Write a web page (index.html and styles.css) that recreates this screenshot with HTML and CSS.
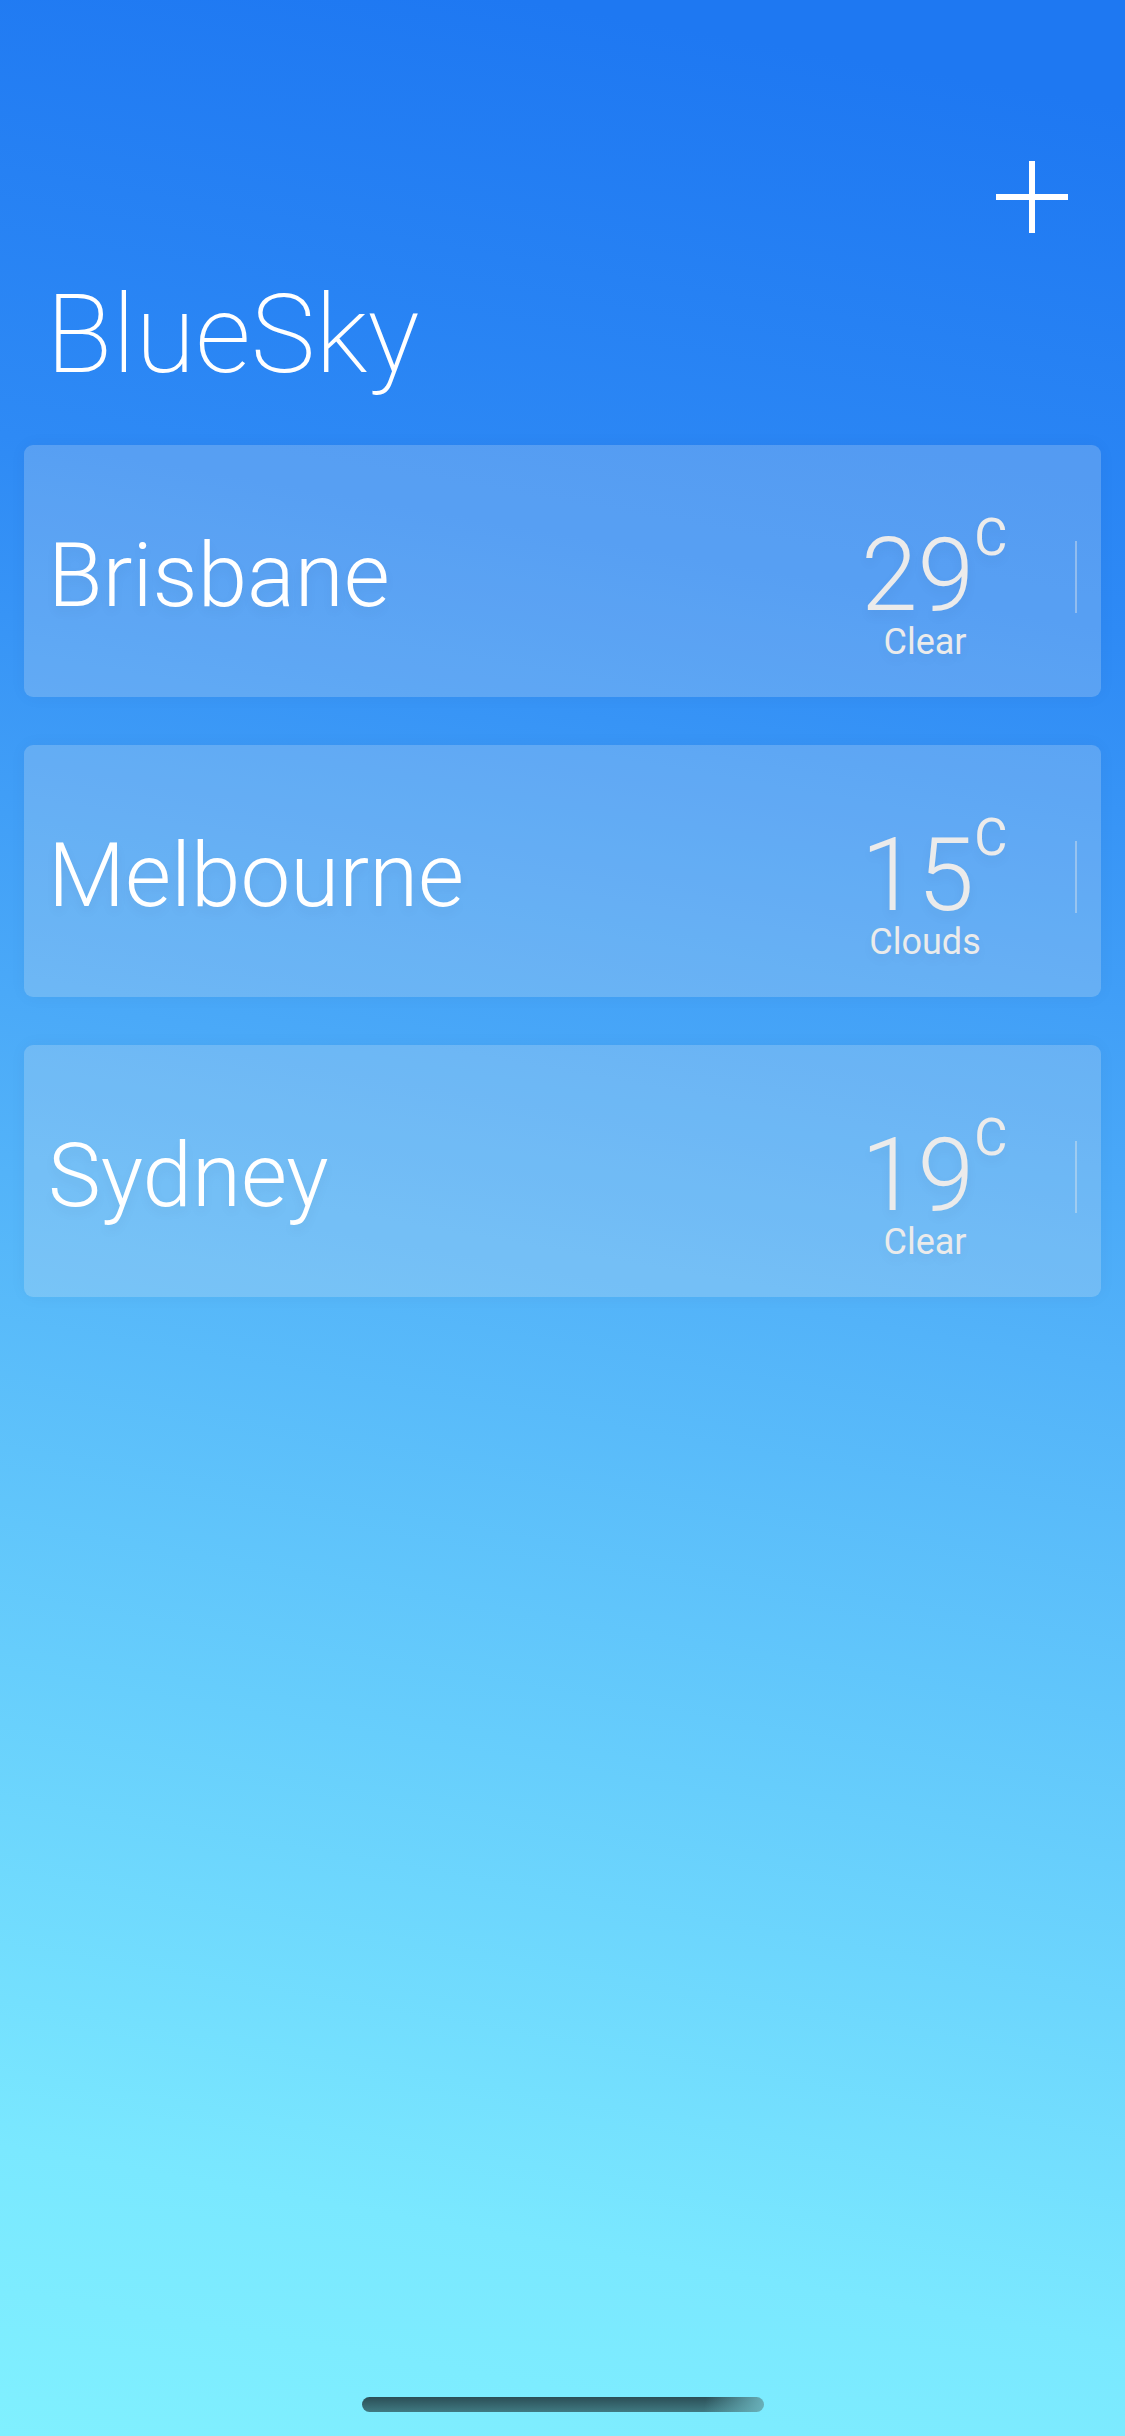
FILE: index.html
```html
<!DOCTYPE html>
<html lang="en">
<head>
<meta charset="utf-8">
<meta name="viewport" content="width=device-width, initial-scale=1">
<title>BlueSky</title>
<link rel="stylesheet" href="styles.css">
</head>
<body>
<header class="header">
  <button class="add" aria-label="Add city"><svg viewBox="0 0 72 72" aria-hidden="true"><path d="M36 0V72M0 36H72"/></svg></button>
  <h1 class="title">BlueSky</h1>
</header>
<main class="cities">
  <a class="city" href="#brisbane">
    <h2 class="name">Brisbane</h2>
    <div class="weather">
      <p class="temp">29<span class="unit">C</span></p>
      <p class="sky">Clear</p>
    </div>
    <span class="rule"></span>
  </a>
  <a class="city" href="#melbourne">
    <h2 class="name">Melbourne</h2>
    <div class="weather">
      <p class="temp">15<span class="unit">C</span></p>
      <p class="sky">Clouds</p>
    </div>
    <span class="rule"></span>
  </a>
  <a class="city" href="#sydney">
    <h2 class="name">Sydney</h2>
    <div class="weather">
      <p class="temp">19<span class="unit">C</span></p>
      <p class="sky">Clear</p>
    </div>
    <span class="rule"></span>
  </a>
</main>
<footer class="footer"><div class="home"></div></footer>
</body>
</html>
```
FILE: styles.css
```css
* { box-sizing: border-box; }
body {
  margin: 0;
  min-height: 100vh;
  display: flex;
  flex-direction: column;
  color: #fff;
  font-family: Roboto, "Liberation Sans", Arial, sans-serif;
  background: linear-gradient(190deg, #1e78f2 4%, #2e8af5 24%, #53b3f9 52%, #7ae8ff 89%, #80f0ff 100%);
}
h1, h2, p { margin: 0; }
.header { padding: 161px 57px 0 46px; }
.add {
  display: block;
  width: 72px;
  height: 72px;
  margin-left: auto;
  padding: 0;
  border: 0;
  background: none;
}
.add svg { display: block; width: 72px; height: 72px; fill: none; stroke: #fff; stroke-width: 6; }
.title { font-weight: 200; font-size: 109px; line-height: 140px; margin-top: 32px; }
.cities { display: flex; flex-direction: column; gap: 48px; padding: 40px 24px 0; }
.city {
  display: flex;
  align-items: center;
  height: 252px;
  padding: 12px 24px 0;
  border-radius: 9px;
  color: inherit;
  text-decoration: none;
  text-shadow: 0 6px 12px rgba(0, 0, 0, .05);
  background: rgba(235, 235, 235, .22);
  box-shadow: 0 0 18px rgba(0, 0, 0, .04);
}
.name { flex: 1; padding-bottom: 2px; font-weight: 300; font-size: 89px; line-height: 100px; }
.weather { width: 128px; margin-top: 38px; color: #ebebeb; text-align: center; }
.temp { display: flex; font-weight: 300; font-size: 102px; line-height: 92px; }
.unit { font-weight: 400; font-size: 51px; line-height: 18px; }
.sky { font-size: 36px; line-height: 42px; }
.rule { width: 2px; height: 72px; margin-left: 86px; background: rgba(235, 235, 235, .4); }
.footer { margin-top: auto; padding-bottom: 24px; }
.home {
  width: 402px;
  height: 15px;
  margin: 0 auto;
  border-radius: 8px;
  background:
    linear-gradient(100deg, transparent 85%, #6ab2bb),
    linear-gradient(#2b4e56, #407a82);
}
```
